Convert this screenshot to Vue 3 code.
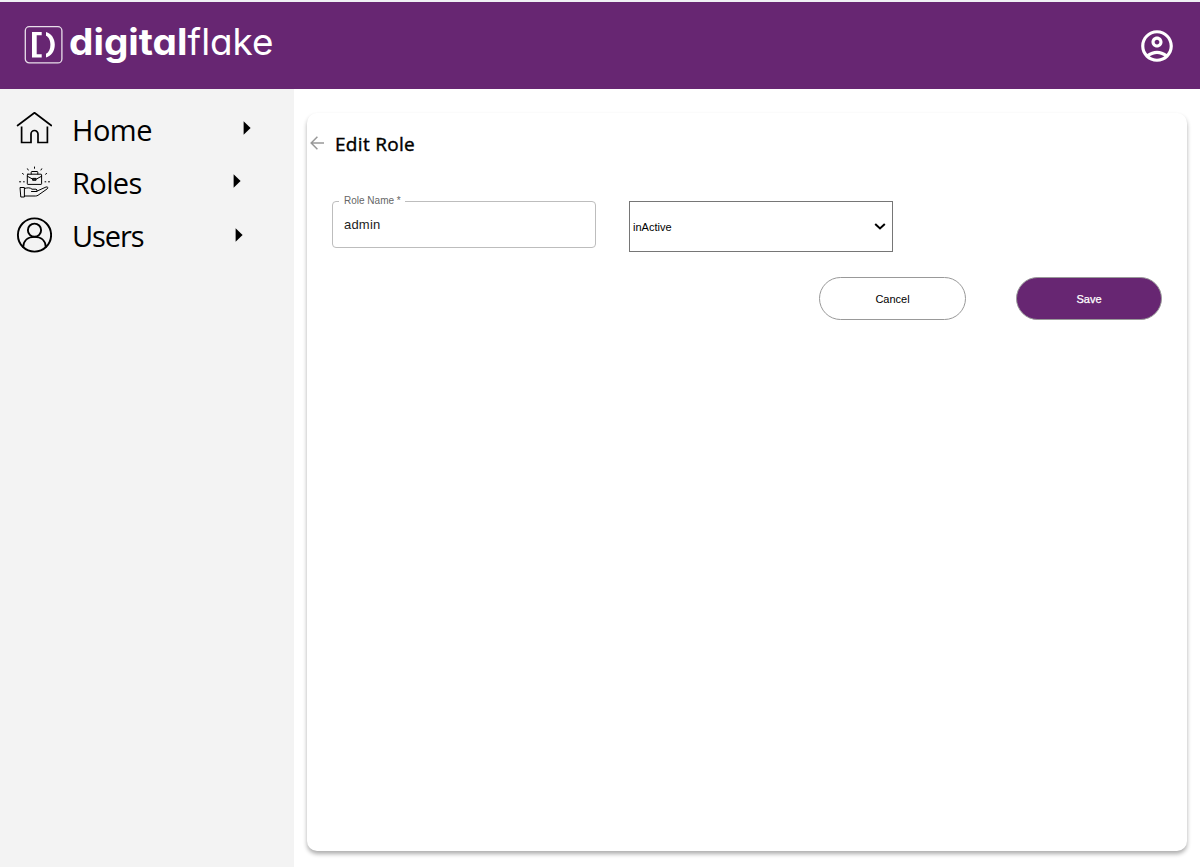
<script setup>
import { ref } from 'vue'

const roleName = ref('admin')
const status = ref('inActive')
const menu = [
  { label: 'Home', icon: 'home' },
  { label: 'Roles', icon: 'roles' },
  { label: 'Users', icon: 'users' },
]
</script>

<template>
  <div class="page">
    <header class="topbar">
      <svg class="logo" width="264" height="76" viewBox="0 -12 264 76" fill="#fff">
        <rect x="1.3" y="6.7" width="36.6" height="36.2" rx="4" fill="none" stroke="#fff" stroke-opacity=".85" stroke-width="1.3" />
        <path d="M8 12H17.7V15.300H12.700V34.300H17.700V37.600H8Z" />
        <path d="M22 12C27.300 13.500 30.800 18.500 30.800 24.800S27.300 36 22 37.500V33.800C24.900 32.500 26.400 29 26.400 24.800S24.900 17 22 15.700Z" />
        <text class="brand bold" x="45" y="34.8" textLength="118.500" lengthAdjust="spacingAndGlyphs">digital</text>
        <text class="brand" x="163.500" y="34.8" textLength="86" lengthAdjust="spacingAndGlyphs">flake</text>
      </svg>
      <svg class="account" width="38" height="38" viewBox="0 0 24 24" fill="#fff">
        <path d="M12 2C6.480 2 2 6.480 2 12s4.480 10 10 10 10-4.480 10-10S17.520 2 12 2zM7.350 18.500C8.660 17.560 10.260 17 12 17s3.340.560 4.650 1.500C15.340 19.440 13.740 20 12 20s-3.340-.560-4.650-1.500zm10.790-1.380C16.450 15.800 14.320 15 12 15s-4.450.800-6.140 2.120C4.700 15.730 4 13.950 4 12c0-4.420 3.580-8 8-8s8 3.580 8 8c0 1.950-.700 3.730-1.860 5.120z" />
        <path d="M12 6c-1.930 0-3.500 1.570-3.500 3.500S10.070 13 12 13s3.500-1.570 3.500-3.500S13.930 6 12 6zm0 5c-.830 0-1.500-.670-1.500-1.500S11.170 8 12 8s1.500.670 1.500 1.500S12.830 11 12 11z" />
      </svg>
    </header>

    <div class="body">
      <nav class="sidebar">
        <div v-for="item in menu" :key="item.icon" class="item" :class="item.icon">
          <svg class="icon" width="36" height="36" viewBox="0 0 36 36" fill="none" stroke="#000" stroke-linecap="round" stroke-linejoin="round">
            <g v-if="item.icon === 'home'" stroke-width="1.700">
              <path d="M1.600 14.500L18.500 1.800L35.300 14.500" />
              <path d="M5.600 15.500V31.500H15V23A3.500 3.500 0 0 1 22 23V31.500H31.400V15.500" stroke-linecap="butt" stroke-linejoin="miter" />
            </g>
            <g v-else-if="item.icon === 'roles'" stroke-width="1">
              <rect x="11.300" y="8.200" width="14.300" height="10.200" rx=".6" />
              <path d="M15.200 8V6.200Q15.200 5.500 16 5.500H21Q21.800 5.500 21.800 6.200V8M11.500 10.300L17 13.300H20L25.400 10.300M17 12.400H20V14.300H17Z" />
              <path d="M18.500 1V2.300M11.500 2.800L12.200 4M25.700 2.800L25 4M6.500 7.500L7.500 8.200M30.600 7.500L29.600 8.200M3.500 15.800H4.700M7.500 15.800H8.300M29 15.800H29.800M32.500 15.800H33.500" />
              <path d="M4.400 21.500H8.400V31H5.200ZM8.400 22.500C12 21.500 14 21.500 16 23.200H20Q21.500 23.500 21 25.500H15.500M21.200 25L30 21C32 20.500 32.500 22 31 23L22 29.300Q21 30 19.500 30H8.400" />
            </g>
            <g v-else stroke-width="1.900">
              <circle cx="18.500" cy="18" r="16.600" />
              <circle cx="18.500" cy="13.200" r="6.600" />
              <path d="M7.200 30C7.500 23.500 12.200 19.900 18.500 19.900S29.500 23.500 29.800 30" />
            </g>
          </svg>
          <span class="label">{{ item.label }}</span>
          <svg class="caret" width="8" height="14" viewBox="0 0 8 14"><path d="M.6 .3L7.600 7L.6 13.700Z" /></svg>
        </div>
      </nav>

      <main class="card">
        <div class="heading">
          <svg class="back" width="14" height="14" viewBox="0 0 14 14" fill="none" stroke="#999" stroke-width="1.500">
            <path d="M14 7H1.500M7.400 .8L1.200 7L7.400 13.200" />
          </svg>
          <h1>Edit Role</h1>
        </div>
        <div class="fields">
          <fieldset class="role-field">
            <legend>Role Name *</legend>
            <input v-model="roleName" aria-label="Role Name" />
          </fieldset>
          <div class="select">
            <span>{{ status }}</span>
            <svg width="12" height="8" viewBox="0 0 12 8" fill="none" stroke="#000" stroke-width="2"><path d="M1.200 1L6 5.500L10.800 1" /></svg>
          </div>
        </div>
        <div class="actions">
          <button type="button">Cancel</button>
          <button type="button" class="save">Save</button>
        </div>
      </main>
    </div>
  </div>
</template>

<style>
html, body { margin: 0; background: #fff; }
</style>

<style scoped>
.page {
  box-sizing: border-box;
  width: 1200px;
  height: 867px;
  display: flex;
  flex-direction: column;
  border-top: 2px solid #f0f0f4;
  overflow: hidden;
  font-family: "Liberation Sans", sans-serif;
}
.topbar {
  height: 87px;
  flex: none;
  box-sizing: border-box;
  padding: 0 25px 0 24px;
  display: flex;
  align-items: flex-start;
  justify-content: space-between;
  background: #672672;
}
.logo { margin-top: 6px; }
.brand { font: 400 37px Inter, sans-serif; font-feature-settings: "cv11"; }
.brand.bold { font-weight: 700; }
.account { margin-top: 25px; margin-right: -1px; }
.body { flex: 1; display: flex; min-height: 0; }
.sidebar {
  width: 294px;
  flex: none;
  box-sizing: border-box;
  background: #f3f3f3;
  padding: 13px 0 0 16px;
}
.item { width: 235px; height: 53.300px; display: flex; align-items: flex-start; }
.icon { margin-top: 9px; }
.label {
  margin-left: 20px;
  flex: 1;
  font: 400 29px/56px "Open Sans", sans-serif;
  color: #000;
  letter-spacing: -0.5px;
}
.caret { margin-top: 19px; }
.roles { width: 225px; }
.roles .icon { margin-top: 11px; }
.roles .label { letter-spacing: -0.6px; }
.users { width: 227px; }
.users .icon { margin-top: 8px; }
.users .label { letter-spacing: -1.1px; line-height: 54px; }
.card {
  width: 880px;
  height: 738px;
  margin: 24px 0 0 13px;
  box-sizing: border-box;
  border-radius: 10px;
  background: #fff;
  box-shadow: 0 3px 4px rgba(0, 0, 0, .32);
}
.heading { display: flex; align-items: center; padding: 17px 0 0 3px; height: 27px; }
.back { margin-top: -2px; }
h1 {
  margin: 2px 0 0 11px;
  font: 500 19px/27px "Open Sans", sans-serif;
  letter-spacing: .3px;
  -webkit-text-stroke: .4px #000;
}
.fields { display: flex; gap: 33px; padding: 38px 0 0 25px; align-items: flex-start; }
.role-field {
  box-sizing: border-box;
  width: 264px;
  height: 53px;
  margin: 0;
  padding: 0 11px 0 6px;
  border: 1px solid #bdbdbd;
  border-radius: 4px;
}
legend { padding: 0 4px 0 5px; font-size: 10px; line-height: 12px; color: #666; letter-spacing: 0; }
input {
  display: block;
  width: 200px;
  margin: 8px 0 0 5px;
  padding: 0;
  border: 0;
  outline: 0;
  font: 13px/20px "Liberation Sans", sans-serif;
  letter-spacing: .2px;
  color: #222;
}
.select {
  box-sizing: border-box;
  width: 264px;
  height: 51px;
  margin-top: 6px;
  padding: 0 6px 0 3px;
  border: 1px solid #767676;
  display: flex;
  align-items: center;
  justify-content: space-between;
  font-size: 11px;
}
.actions { display: flex; justify-content: flex-end; gap: 50px; padding: 25px 25px 0 0; }
button {
  box-sizing: border-box;
  width: 147px;
  height: 43px;
  padding: 0;
  border: 1px solid #999;
  border-radius: 22px;
  background: #fff;
  color: #000;
  font: 11px "Liberation Sans", sans-serif;
}
.actions .save { width: 146px; background: #672672; color: #fff; -webkit-text-stroke: .25px #fff; }
</style>
